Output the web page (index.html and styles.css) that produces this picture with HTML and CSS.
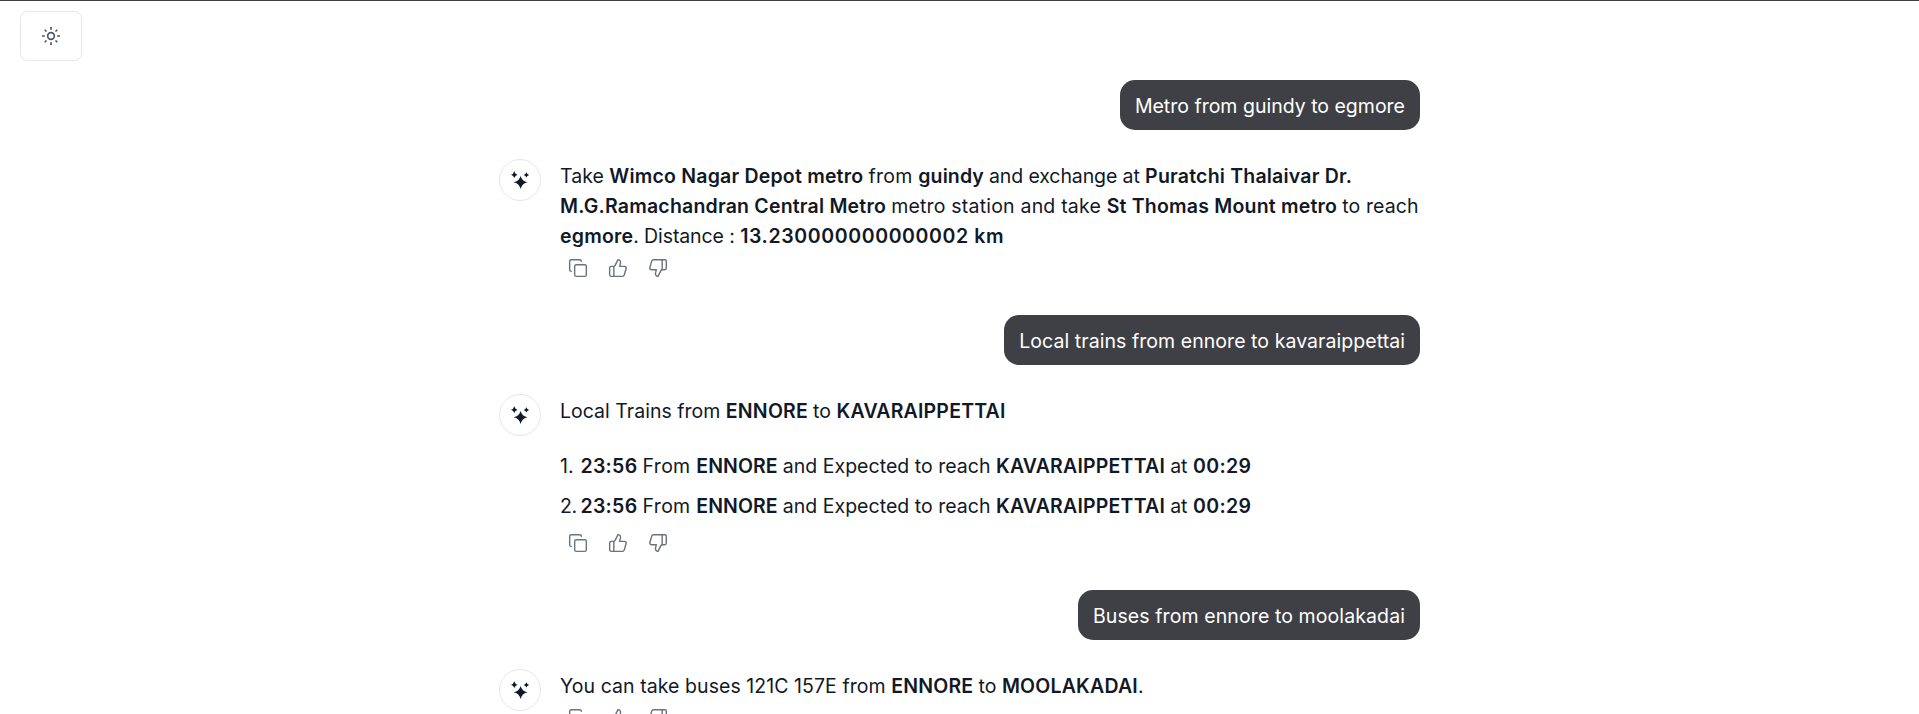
FILE: index.html
```html
<!DOCTYPE html>
<html lang="en">
<head>
<meta charset="utf-8">
<title>Transit chat</title>
<link rel="stylesheet" href="styles.css">
</head>
<body>
<svg class="sprite" aria-hidden="true">
  <symbol id="copy" viewBox="0 0 24 24"><rect x="8" y="8" width="14" height="14" rx="2"/><path d="M4 16c-1.1 0-2-.9-2-2V4c0-1.1.9-2 2-2h10c1.1 0 2 .9 2 2"/></symbol>
  <symbol id="up" viewBox="0 0 24 24"><path d="M7 10v12M15 5.88 14 10h5.83a2 2 0 0 1 1.92 2.56l-2.33 8A2 2 0 0 1 17.5 22H4a2 2 0 0 1-2-2v-8a2 2 0 0 1 2-2h2.76a2 2 0 0 0 1.79-1.11L12 2a3.13 3.13 0 0 1 3 3.88Z"/></symbol>
  <symbol id="down" viewBox="0 0 24 24"><path d="M17 14V2M9 18.12 10 14H4.17a2 2 0 0 1-1.92-2.56l2.33-8A2 2 0 0 1 6.5 2H20a2 2 0 0 1 2 2v8a2 2 0 0 1-2 2h-2.76a2 2 0 0 0-1.79 1.11L12 22a3.13 3.13 0 0 1-3-3.88Z"/></symbol>
  <symbol id="stars" viewBox="0 0 20 20"><path d="M10.6 6Q11.9 11.2 17.6 12.3Q11.9 13.4 10.6 19Q9.3 13.4 3.6 12.3Q9.3 11.2 10.6 6ZM4.3 1.3Q5 4.1 7.6 4.7Q5 5.3 4.3 8.1Q3.6 5.3 1 4.7Q3.6 4.1 4.3 1.3ZM16.4 2.2Q17 4.4 19.1 4.9Q17 5.4 16.4 7.6Q15.8 5.4 13.7 4.9Q15.8 4.4 16.4 2.2Z"/></symbol>
</svg>
<header class="toolbar">
  <button class="theme" aria-label="Toggle theme">
    <svg class="icon sun" viewBox="0 0 24 24"><circle cx="12" cy="12" r="4"/><path d="M12 1.2v3.4M12 19.4v3.4M4.5 4.5l2.1 2.1M17.4 17.4l2.1 2.1M1.2 12h3.4M19.4 12h3.4M6.6 17.4l-2.1 2.1M19.5 4.5l-2.1 2.1"/></svg>
  </button>
</header>
<main class="chat">
  <div class="bubble">Metro from guindy to egmore</div>
  <section class="reply">
    <div class="avatar"><svg><use href="#stars"/></svg></div>
    <div class="body">
      <p>Take <b>Wimco Nagar Depot metro </b><span class="t3">from </span><b class="t1">guindy </b><span class="tight">and exchange at </span><b>Puratchi Thalaivar Dr.</b><br><b>M.G.Ramachandran Central Metro </b><span class="t2">metro station and take </span><b>St Thomas Mount metro </b><span class="t1">to reach</span><br><b>egmore</b><span class="tight">. Distance : </span><b class="t6">13.230000000000002 km</b></p>
      <div class="actions"><svg class="icon"><use href="#copy"/></svg><svg class="icon"><use href="#up"/></svg><svg class="icon"><use href="#down"/></svg></div>
    </div>
  </section>
  <div class="bubble t0">Local trains from ennore to kavaraippettai</div>
  <section class="reply">
    <div class="avatar"><svg><use href="#stars"/></svg></div>
    <div class="body">
      <p>Local Trains from <b>ENNORE </b>to <b>KAVARAIPPETTAI</b></p>
      <div class="trains">
        <div><span class="num">1.</span><b class="t3">23:56 </b><span class="t3">From </span><b class="t1">ENNORE </b>and Expected to reach <b>KAVARAIPPETTAI </b>at <b class="t4">00:29</b></div>
        <div><span class="num two">2.</span><b class="t3">23:56 </b><span class="t3">From </span><b class="t1">ENNORE </b>and Expected to reach <b>KAVARAIPPETTAI </b>at <b class="t4">00:29</b></div>
      </div>
      <div class="actions"><svg class="icon"><use href="#copy"/></svg><svg class="icon"><use href="#up"/></svg><svg class="icon"><use href="#down"/></svg></div>
    </div>
  </section>
  <div class="bubble t1">Buses from ennore to moolakadai</div>
  <section class="reply">
    <div class="avatar"><svg><use href="#stars"/></svg></div>
    <div class="body">
      <p><span class="t0">You can take buses 121C 157E from </span><b>ENNORE </b>to <b>MOOLAKADAI</b>.</p>
      <div class="actions"><svg class="icon"><use href="#copy"/></svg><svg class="icon"><use href="#up"/></svg><svg class="icon"><use href="#down"/></svg></div>
    </div>
  </section>
</main>
</body>
</html>
```

FILE: styles.css
```css
* { box-sizing: border-box; }
html { overflow: hidden; }
body {
  margin: 0;
  height: 714px;
  overflow: hidden;
  background: #fff;
  color: #111827;
  border-top: 1px solid #3f3f42;
  font: 400 19.5px/30px Inter, sans-serif;
  letter-spacing: .02px;
}
.sprite { display: none; }
.toolbar { height: 79.4px; padding: 10px 20px; }
.theme {
  display: flex;
  align-items: center;
  justify-content: center;
  width: 62px;
  height: 50px;
  padding: 0;
  border: 1px solid #e5e7eb;
  border-radius: 7.5px;
  background: #fff;
}
.icon {
  display: block;
  width: 20px;
  height: 20px;
  fill: none;
  stroke: #6b7280;
  stroke-width: 1.7;
  stroke-linecap: round;
  stroke-linejoin: round;
}
.sun { stroke: #4b5563; stroke-width: 2; stroke-linecap: butt; }
.chat {
  display: flex;
  flex-direction: column;
  width: 921px;
  height: 633.6px;
  overflow-y: clip;
  margin-left: 499px;
}
.chat > * { flex: none; }
.bubble {
  align-self: flex-end;
  height: 50px;
  padding: 10.6px 15px 9px;
  border-radius: 15px;
  background: #3f3f46;
  color: #fff;
  letter-spacing: 0;
  white-space: nowrap;
}
.reply {
  display: flex;
  gap: 19px;
  margin: 28.7px 0 29.3px;
}
.avatar {
  display: flex;
  align-items: center;
  justify-content: center;
  flex: none;
  width: 42px;
  height: 42px;
  border: 1px solid #e5e7eb;
  border-radius: 50%;
}
.avatar svg { width: 20px; height: 20px; fill: #111827; }
.body { padding-top: 2px; white-space: nowrap; }
p { margin: 0; }
b { font-weight: 600; white-space: pre; letter-spacing: .2px; }
span { white-space: pre; }
.trains {
  display: grid;
  gap: 10px;
  margin: 25px 0 5px;
}
.num { display: inline-block; width: 20.5px; }
.two { letter-spacing: -.4px; }
.actions { display: flex; gap: 20px; padding: 7px 7.5px 8px; }
.tight { letter-spacing: -.1px; }
.t0 { letter-spacing: .06px; }
.t1 { letter-spacing: .1px; }
.t2 { letter-spacing: .2px; }
.t3 { letter-spacing: .28px; }
.t4 { letter-spacing: .35px; }
.t6 { letter-spacing: .62px; }
```
